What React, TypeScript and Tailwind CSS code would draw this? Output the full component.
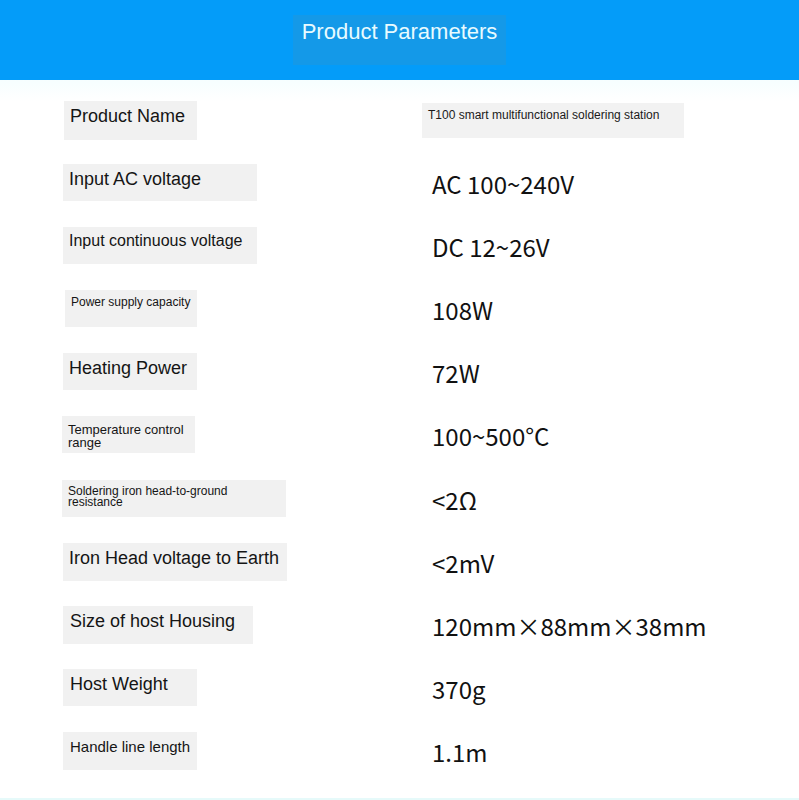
const rows = [
  { label: "Product Name", value: "T100 smart multifunctional soldering station", box: "ml-[64px] w-[133px] h-[39px] pl-[6px] pt-[5px] text-[18px] leading-[21px]" },
  { label: "Input AC voltage", value: "AC 100~240V", box: "ml-[63px] w-[194px] h-[37px] pl-[6px] pt-[5px] text-[18px] leading-[21px]" },
  { label: "Input continuous voltage", value: "DC 12~26V", box: "ml-[63px] w-[194px] h-[37px] pl-[6px] pt-[5px] text-[16px] leading-[18px]" },
  { label: "Power supply capacity", value: "108W", box: "ml-[65px] w-[132px] h-[37px] pl-[6px] pt-[5px] text-[12px] leading-[14px]" },
  { label: "Heating Power", value: "72W", box: "ml-[63px] w-[134px] h-[37px] pl-[6px] pt-[5px] text-[18px] leading-[21px]" },
  { label: "Temperature control range", value: "100~500°C", box: "ml-[62px] w-[133px] h-[37px] pl-[6px] pt-[7px] text-[13px] leading-[13px]" },
  { label: "Soldering iron head-to-ground resistance", value: "<2Ω", box: "ml-[62px] w-[224px] h-[37px] pl-[6px] pt-[6px] text-[12px] leading-[11px] pr-[50px]" },
  { label: "Iron Head voltage to Earth", value: "<2mV", box: "ml-[63px] w-[224px] h-[38px] pl-[6px] pt-[5px] text-[18px] leading-[21px]" },
  { label: "Size of host Housing", value: "120mm×88mm×38mm", box: "ml-[63px] w-[190px] h-[38px] pl-[7px] pt-[5px] text-[18px] leading-[21px]" },
  { label: "Host Weight", value: "370g", box: "ml-[63px] w-[134px] h-[37px] pl-[7px] pt-[5px] text-[18px] leading-[21px]" },
  { label: "Handle line length", value: "1.1m", box: "ml-[63px] w-[134px] h-[38px] pl-[7px] pt-[6px] text-[15px] leading-[17px]" },
];

function ParamRow({ label, value, box, first }: { label: string; value: string; box: string; first: boolean }) {
  return (
    <div className="flex h-[63.1px] items-start">
      <div className="w-[422px] shrink-0">
        <div className={`bg-[#f1f1f1] text-[#151515] ${box}`}>{label}</div>
      </div>
      {first ? (
        <div className="mt-[2px] h-[35px] w-[262px] bg-[#f2f2f2] pl-[6px] pt-[5px] text-[12px] leading-[14px] text-[#1a1a1a]">
          {value}
        </div>
      ) : (
        <div className="flex h-[40px] items-center pl-[10px] text-[24px] leading-none text-[#111] [font-family:'Noto_Sans_CJK_SC','Noto_Sans',sans-serif]">
          {value}
        </div>
      )}
    </div>
  );
}

export default function App() {
  return (
    <div className="flex h-[800px] w-full flex-col bg-white [font-family:'Liberation_Sans',Arial,sans-serif]">
      <div className="flex h-[80px] shrink-0 justify-center bg-[#049cf9]">
        <div className="mt-[15px] h-[50px] w-[213px] bg-[#1499e8] pt-[4px] text-center text-[22px] leading-[26px] text-[#e8fbff]">
          Product Parameters
        </div>
      </div>
      <div className="h-[21px] shrink-0 bg-gradient-to-b from-[#f6feff] to-white" />
      <div className="flex flex-1 flex-col">
        {rows.map((r, i) => (
          <ParamRow key={r.label} label={r.label} value={r.value} box={r.box} first={i === 0} />
        ))}
      </div>
      <div className="h-[2px] shrink-0 bg-[#e6fafa]" />
    </div>
  );
}
